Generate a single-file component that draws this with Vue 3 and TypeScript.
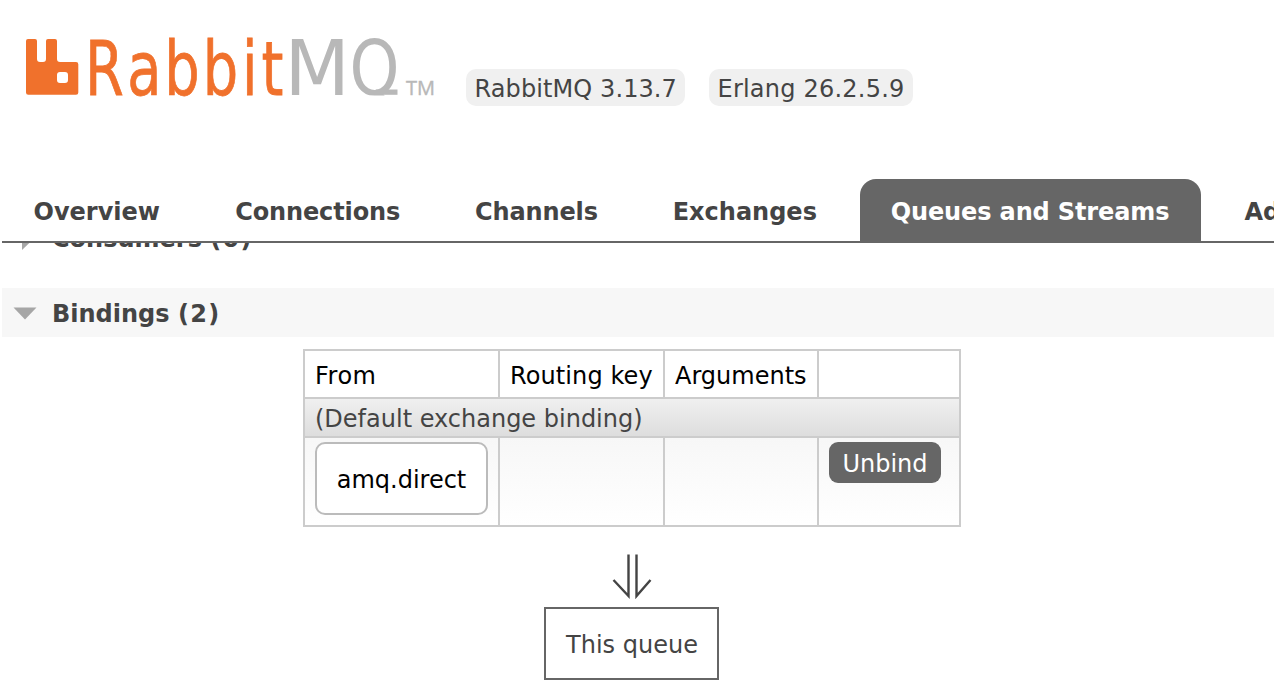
<script setup lang="ts">
interface Tab {
  label: string
  key: string
  active?: boolean
}

interface Version {
  label: string
  key: string
}

const versions: Version[] = [
  { label: 'RabbitMQ 3.13.7', key: 'broker' },
  { label: 'Erlang 26.2.5.9', key: 'erlang' },
]

const tabs: Tab[] = [
  { label: 'Overview', key: 'overview' },
  { label: 'Connections', key: 'connections' },
  { label: 'Channels', key: 'channels' },
  { label: 'Exchanges', key: 'exchanges' },
  { label: 'Queues and Streams', key: 'queues', active: true },
  { label: 'Admin', key: 'admin' },
]
</script>

<template>
  <div class="page">
    <header class="header">
      <div class="brand">
        <svg class="logo" width="420" height="70" viewBox="20 32 420 70" role="img" aria-label="RabbitMQ">
          <defs>
            <clipPath id="baseline"><rect x="280" y="20" width="130" height="75.500" /></clipPath>
          </defs>
          <path
            class="orange"
            fill-rule="evenodd"
            d="M28 39h7q2 0 2 2v18q0 3 3 3h3q3 0 3-3V41q0-2 2-2h7q2 0 2 2v18q0 3 3 3h16q2.300 0 2.300 2.300V92.500q0 2.300-2.300 2.300H28.300q-2.300 0-2.300-2.300V41q0-2 2-2zM60 72q-3 0-3 3v5q0 3 3 3h5q3 0 3-3v-5q0-3-3-3z"
          />
          <g class="word rabbit orange" transform="translate(1.200 94.500) scale(.74 1)">
            <text x="113.200 170.500 220.500 272.300 325.300 351.700" y="0">Rabbit</text>
          </g>
          <g class="word grey" clip-path="url(#baseline)">
            <text transform="translate(284.500 94.700) scale(.99 1)">M</text>
            <text transform="translate(349.500 94.700) scale(.83 1)">Q</text>
          </g>
          <path class="grey" d="M376 89.500h21.500v5.300H376z" />
          <text class="tm" x="406" y="95">TM</text>
        </svg>
        <ul class="versions">
          <li v-for="v in versions" :key="v.key" :class="v.key">{{ v.label }}</li>
        </ul>
      </div>
      <nav class="tabs">
        <a v-for="tab in tabs" :key="tab.key" :class="['tab', tab.key, { active: tab.active }]">{{ tab.label }}</a>
      </nav>
    </header>

    <main class="main">
      <h2 class="section consumers">
        <svg class="toggle" width="24" height="24" viewBox="0 0 24 24"><path d="M9 0v23l12-11.500z" /></svg>
        <span>Consumers <span class="count">(0)</span></span>
      </h2>
      <h2 class="section open">
        <svg class="toggle" width="24" height="24" viewBox="0 0 24 24"><path d="M.5 5.500h23L12 17.500z" /></svg>
        <span>Bindings <span class="count">(2)</span></span>
      </h2>

      <div class="bindings">
        <table>
          <colgroup>
            <col class="c-from" />
            <col class="c-key" />
            <col class="c-args" />
            <col class="c-action" />
          </colgroup>
          <thead>
            <tr>
              <th class="from">From</th>
              <th class="key">Routing key</th>
              <th>Arguments</th>
              <th></th>
            </tr>
          </thead>
          <tbody>
            <tr class="default">
              <td colspan="4">(Default exchange binding)</td>
            </tr>
            <tr class="binding">
              <td><span class="exchange">amq.direct</span></td>
              <td></td>
              <td></td>
              <td><button class="unbind">Unbind</button></td>
            </tr>
          </tbody>
        </table>
        <svg class="arrow" width="40" height="48" viewBox="0 0 40 48">
          <path d="M16.500 1.500V43L1.500 27M24.500 1.500V43L38.500 27" />
        </svg>
        <div class="queue">This queue</div>
      </div>
    </main>
  </div>
</template>

<style>
html,
body {
  margin: 0;
  background: #fff;
  overflow: hidden;
}
</style>

<style scoped>
.page {
  width: 1274px;
  height: 698px;
  overflow: hidden;
  box-sizing: border-box;
  padding-left: 2px;
  color: #444;
  font: 24px/28px Verdana, 'DejaVu Sans', sans-serif;
}
.header {
  position: relative;
  z-index: 1;
  display: flex;
  flex-direction: column;
  justify-content: space-between;
  box-sizing: border-box;
  height: 243px;
  padding-top: 32px;
  background: #fff;
  border-bottom: 2px solid #666;
}
.brand {
  display: flex;
  align-items: flex-start;
  padding-left: 18px;
}
.logo {
  display: block;
  flex: none;
  overflow: visible;
}
.word {
  font: 400 76.5px 'DejaVu Sans', sans-serif;
}
.word.rabbit {
  font-size: 75.5px;
  stroke: #f0712c;
  stroke-width: 0.8;
}
.orange {
  fill: #f0712c;
}
.grey {
  fill: #b8b8b8;
}
.tm {
  fill: #b8b8b8;
  stroke: #b8b8b8;
  stroke-width: 0.4;
  font: 20px 'Open Sans', sans-serif;
}
.versions {
  display: flex;
  gap: 24px;
  margin: 37px 0 0 26px;
  padding: 0;
  list-style: none;
}
.versions li {
  box-sizing: border-box;
  height: 37px;
  padding: 6px 8px 0 8.5px;
  border-radius: 10px;
  background: #f0f0f0;
  white-space: nowrap;
}
.versions .broker {
  width: 219px;
  letter-spacing: 0.1px;
}
.versions .erlang {
  width: 204px;
  letter-spacing: 0.22px;
}
.tabs {
  display: flex;
  gap: 12.8px;
  height: 62px;
  padding-left: 0.5px;
}
.tab {
  flex: none;
  box-sizing: border-box;
  padding: 19px 31px 0;
  border-radius: 16px 16px 0 0;
  font-weight: 700;
  white-space: nowrap;
}
.tab.connections {
  padding-left: 31.4px;
  letter-spacing: -0.12px;
}
.tab.channels {
  letter-spacing: -0.12px;
}
.tab.queues {
  width: 341px;
  margin-left: -1px;
  letter-spacing: -0.13px;
}
.tab.active {
  background: #666;
  color: #fff;
}
.main {
  display: flex;
  flex-direction: column;
  gap: 25px;
  margin-top: -29px;
}
.section {
  display: flex;
  align-items: center;
  gap: 15px;
  box-sizing: border-box;
  height: 49px;
  margin: 0;
  padding: 3px 0 0 11px;
  font-size: 24px;
  font-weight: 700;
}
.section.consumers {
  padding-top: 1px;
}
.count {
  letter-spacing: 1.3px;
}
.section.open {
  background: #f7f7f7;
}
.toggle {
  flex: none;
  fill: #a6a6a6;
}
.bindings {
  display: flex;
  flex-direction: column;
  align-items: center;
  width: 658px;
  margin: -13px 0 0 301px;
}
table {
  width: 658px;
  height: 178px;
  table-layout: fixed;
  border-collapse: collapse;
}
.c-from {
  width: 195px;
}
.c-key {
  width: 165px;
}
.c-args {
  width: 154px;
}
.c-action {
  width: 142px;
}
th,
td {
  box-sizing: border-box;
  padding: 0 10px;
  border: 2px solid #ccc;
  text-align: left;
  white-space: nowrap;
}
th {
  height: 48px;
  padding-top: 3px;
  color: #000;
  font-weight: 400;
}
th.from {
  letter-spacing: 0.5px;
}
th.key {
  letter-spacing: 0.1px;
}
.default td {
  height: 39px;
  padding-top: 2px;
  background: linear-gradient(#f0f0f0, #ddd);
}
.binding td {
  height: 89px;
  padding-top: 4px;
  vertical-align: top;
  background: linear-gradient(#f7f7f7, #fff);
}
.exchange {
  display: block;
  box-sizing: border-box;
  width: 173px;
  height: 73px;
  border: 2px solid #bbb;
  border-radius: 10px;
  background: #fff;
  color: #000;
  line-height: 73px;
  text-align: center;
}
.unbind {
  display: block;
  width: 112px;
  height: 41px;
  padding: 2px 0 0;
  border: 0;
  border-radius: 9px;
  background: #666;
  color: #fff;
  font: inherit;
}
.arrow {
  margin: 26px 0 6px;
  fill: none;
  stroke: #444;
  stroke-width: 2.4;
}
.queue {
  box-sizing: border-box;
  width: 175px;
  height: 73px;
  margin-right: 1px;
  padding-left: 1px;
  border: 2px solid #666;
  line-height: 73px;
  text-align: center;
}
</style>
